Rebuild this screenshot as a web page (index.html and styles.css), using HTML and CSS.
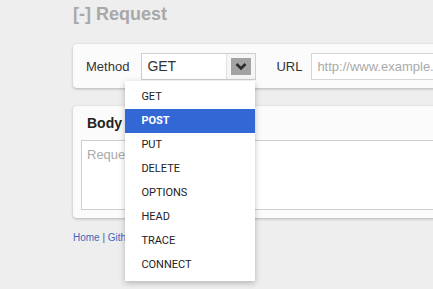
FILE: index.html
```html
<!DOCTYPE html>
<html>
<head>
<meta charset="utf-8">
<link rel="stylesheet" href="styles.css">
</head>
<body>
<div class="page">
  <h1 class="title">[-] Request</h1>
  <div class="panel req-bar">
    <span class="label">Method</span>
    <div class="select">
      <span class="select-value">GET</span>
      <span class="select-btn">
        <span class="arrow">
          <svg width="12" height="9" viewBox="0 0 12 9"><path d="M1.5 2 L6 6.5 L10.5 2" fill="none" stroke="#2b2b2b" stroke-width="2.6"/></svg>
        </span>
      </span>
      <ul class="menu">
        <li>GET</li>
        <li class="active">POST</li>
        <li>PUT</li>
        <li>DELETE</li>
        <li>OPTIONS</li>
        <li>HEAD</li>
        <li>TRACE</li>
        <li>CONNECT</li>
      </ul>
    </div>
    <span class="label url-label">URL</span>
    <div class="input">http://www.example.com/</div>
  </div>
  <div class="panel body-panel">
    <div class="body-head">Body</div>
    <div class="textarea">Request body</div>
  </div>
  <div class="footer"><a href="#">Home</a> | <a href="#">Github</a></div>
</div>
</body>
</html>
```
FILE: styles.css
```css
html, body {
  margin: 0;
  padding: 0;
  background: #eeeeee;
  overflow: hidden;
}
body {
  font-family: "Liberation Sans", Arial, sans-serif;
  width: 433px;
  height: 289px;
}
.page {
  padding-left: 73px;
  width: 600px;
}
.title {
  margin: 0;
  padding-top: 4px;
  height: 44px;
  box-sizing: border-box;
  font-size: 18px;
  line-height: 20px;
  font-weight: bold;
  color: #a8a8a8;
}
.panel {
  background: #fbfbfb;
  border-radius: 4px;
  box-shadow: 0 1px 3px rgba(0,0,0,0.25);
}
.req-bar {
  display: flex;
  align-items: center;
  height: 44px;
  box-sizing: border-box;
  padding: 0 13px;
}
.label {
  font-size: 13px;
  color: #333;
}
.select {
  position: relative;
  margin-left: 12px;
  width: 115px;
  height: 27px;
  box-sizing: border-box;
  border: 1px solid #cfcfcf;
  background: #fff;
  display: flex;
  align-items: center;
}
.select-value {
  flex: 1;
  padding-left: 5px;
  font-size: 14px;
  color: #333;
}
.select-btn {
  width: 28px;
  height: 100%;
  border-left: 1px solid #e2e2e2;
  display: flex;
  align-items: center;
  justify-content: center;
  background: #f6f6f6;
}
.arrow {
  width: 20px;
  height: 17px;
  background: #a3a3a3;
  display: flex;
  align-items: center;
  justify-content: center;
}
.arrow svg { display: block; }
.url-label {
  margin-left: 20px;
}
.input {
  margin-left: 9px;
  flex: 1;
  height: 27px;
  box-sizing: border-box;
  border: 1px solid #d5d5d5;
  background: #fff;
  padding-left: 5px;
  font-size: 13px;
  line-height: 25px;
  color: #aaa;
}
.menu {
  position: absolute;
  left: -17px;
  top: 27px;
  width: 130px;
  margin: 0;
  padding: 4px 0;
  list-style: none;
  background: #fff;
  box-shadow: 0 2px 6px rgba(0,0,0,0.25);
  z-index: 5;
}
.menu li {
  height: 24px;
  line-height: 24px;
  padding-left: 16px;
  font-family: Roboto, "Liberation Sans", sans-serif;
  font-size: 11px;
  color: #222;
}
.menu li.active {
  background: #3367d6;
  color: #fff;
  font-weight: bold;
}
.body-panel {
  margin-top: 18px;
  height: 112px;
  box-sizing: border-box;
  padding: 0 8px;
}
.body-head {
  height: 34px;
  line-height: 34px;
  padding-left: 6px;
  font-size: 14px;
  font-weight: bold;
  color: #222;
}
.textarea {
  height: 70px;
  box-sizing: border-box;
  border: 1px solid #cfcfcf;
  background: #fff;
  padding: 6px 5px;
  font-size: 13px;
  color: #aaa;
}
.footer {
  margin-top: 14px;
  font-size: 10px;
  color: #555;
}
.footer a {
  color: #4466bb;
  text-decoration: none;
}
```
